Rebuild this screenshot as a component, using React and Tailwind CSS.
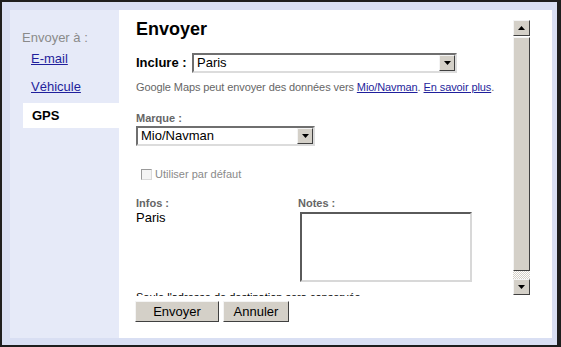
import React from 'react';

const font = { fontFamily: '"Liberation Sans", Arial, sans-serif' };

function Arrow({ up }) {
  return (
    <svg width="7" height="4" viewBox="0 0 7 4">
      {up ? <polygon points="0,4 7,4 3.5,0" fill="#000" /> : <polygon points="0,0 7,0 3.5,4" fill="#000" />}
    </svg>
  );
}

function BevelBox({ className = '', children }) {
  return (
    <div className={`bg-[#d4d0c8] border border-t-[#f4f4f4] border-l-[#f4f4f4] border-b-[#404040] border-r-[#404040] flex items-center justify-center ${className}`}>
      {children}
    </div>
  );
}

function Select({ value, width }) {
  return (
    <div className={`${width} h-[20px] flex items-center bg-white border-2 border-t-[#6f6f6f] border-l-[#6f6f6f] border-b-[#dcdcdc] border-r-[#dcdcdc]`}>
      <span className="flex-1 pl-[3px] text-[13px] leading-[16px] text-black">{value}</span>
      <BevelBox className="w-[16px] h-[16px]">
        <Arrow />
      </BevelBox>
    </div>
  );
}

export default function App() {
  return (
    <div className="w-[561px] h-[347px] bg-[#1e1e1e] pt-[2px] pl-[2px] pr-[4px] pb-[2px]" style={font}>
      <div className="h-full bg-[#d9dff3] pt-[8px] pl-[8px] pr-[5px] pb-[7px] flex">
        {/* sidebar */}
        <div className="w-[109px] bg-[#e6eaf8] pt-[20px]">
          <div className="pl-[12px] text-[13px] leading-[16px] text-[#8a8a8a]">Envoyer à :</div>
          <div className="ml-[21px] mt-[5px] text-[13px] leading-[16px] text-[#1f1f9c] underline">E-mail</div>
          <div className="ml-[21px] mt-[12px] text-[13px] leading-[16px] text-[#1f1f9c] underline">Véhicule</div>
          <div className="ml-[13px] mt-[8px] h-[25px] bg-white pl-[9px] flex items-center text-[13px] font-bold text-black">GPS</div>
        </div>

        {/* main panel */}
        <div className="flex-1 bg-white pt-[8px] pl-[17px] pr-[22px]">
          <div className="h-[278px] flex">
            <div className="flex-1 overflow-hidden">
              <h1 className="text-[18px] leading-[22px] font-bold text-black">Envoyer</h1>

              <div className="mt-[13px] flex items-center">
                <span className="text-[13px] font-bold text-black w-[56px]">Inclure :</span>
                <Select value="Paris" width="w-[265px]" />
              </div>

              <p className="mt-[7px] text-[11px] leading-[14px] text-[#666] tracking-[-0.1px]">
                Google Maps peut envoyer des données vers{' '}
                <span className="text-[#1f1f9c] underline">Mio/Navman</span>.{' '}
                <span className="text-[#1f1f9c] underline">En savoir plus</span>.
              </p>

              <div className="mt-[17px] text-[11px] leading-[14px] font-bold text-[#666]">Marque :</div>
              <div className="mt-[1px]">
                <Select value="Mio/Navman" width="w-[179px]" />
              </div>

              <div className="mt-[21px] ml-[5px] flex items-center h-[14px]">
                <span className="w-[11px] h-[11px] bg-[#f4f4f4] border border-t-[#9a9a9a] border-l-[#9a9a9a] border-b-[#dadada] border-r-[#dadada]" />
                <span className="ml-[3px] text-[11px] leading-[14px] text-[#8a8a8a]">Utiliser par défaut</span>
              </div>

              <div className="mt-[15px] flex">
                <div className="w-[162px]">
                  <div className="text-[11px] leading-[14px] font-bold text-[#666]">Infos :</div>
                  <div className="text-[13px] leading-[16px] text-black">Paris</div>
                </div>
                <div>
                  <div className="text-[11px] leading-[14px] font-bold text-[#666]">Notes :</div>
                  <div className="mt-[2px] ml-[2px] w-[172px] h-[70px] bg-white border-2 border-t-[#5a5a5a] border-l-[#5a5a5a] border-b-[#d8d8d8] border-r-[#d8d8d8]" />
                </div>
              </div>

              <p className="mt-[8px] text-[11px] leading-[14px] text-black">
                Seule l'adresse de destination sera conservée
              </p>
            </div>

            {/* scrollbar */}
            <div className="w-[17px] pt-[2px] pb-[1px] flex flex-col">
              <BevelBox className="h-[16px]">
                <Arrow up />
              </BevelBox>
              <BevelBox className="h-[234px] mt-[1px]" />
              <div className="flex-1 bg-[repeating-conic-gradient(#d4d0c8_0_25%,#ffffff_0_50%)] bg-[length:2px_2px]" />
              <BevelBox className="h-[16px]">
                <Arrow />
              </BevelBox>
            </div>
          </div>

          <div className="mt-[5px] -ml-px flex gap-[4px]">
            <BevelBox className="w-[84px] h-[21px] text-[13px] text-black">Envoyer</BevelBox>
            <BevelBox className="w-[66px] h-[21px] text-[13px] text-black">Annuler</BevelBox>
          </div>
        </div>
      </div>
    </div>
  );
}
